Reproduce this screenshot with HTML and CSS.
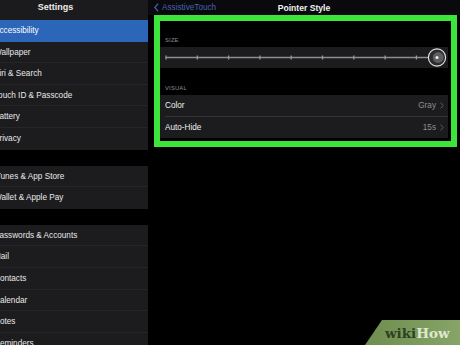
FILE: index.html
```html
<!DOCTYPE html>
<html lang="en">
<head>
    <meta charset="UTF-8">
    <meta name="viewport" content="width=device-width, initial-scale=1.0">
    <title>Pointer Style</title>
    <link rel="stylesheet" href="styles.css">
</head>
<body>
    <div class="screen">
        <aside class="sidebar">
            <div class="sidebar-title">Settings</div>
            <ul class="group">
                <li class="row active">Accessibility</li>
                <li class="row">Wallpaper</li>
                <li class="row">Siri &amp; Search</li>
                <li class="row">Touch ID &amp; Passcode</li>
                <li class="row">Battery</li>
                <li class="row last">Privacy</li>
            </ul>
            <ul class="group">
                <li class="row">iTunes &amp; App Store</li>
                <li class="row last">Wallet &amp; Apple Pay</li>
            </ul>
            <ul class="group">
                <li class="row">Passwords &amp; Accounts</li>
                <li class="row">Mail</li>
                <li class="row">Contacts</li>
                <li class="row">Calendar</li>
                <li class="row">Notes</li>
                <li class="row">Reminders</li>
            </ul>
        </aside>

        <main class="detail">
            <div class="navbar">
                <a class="back">
                    <svg width="5" height="9" viewBox="0 0 5 9"><polyline points="4.2,0.6 0.8,4.5 4.2,8.4" fill="none" stroke="#4762b0" stroke-width="1.2"/></svg>
                    AssistiveTouch
                </a>
                <div class="nav-title">Pointer Style</div>
                <span></span>
            </div>

            <div class="highlight">
                <div class="section-label">Size</div>
                <div class="slider-row">
                    <svg width="288" height="21" viewBox="0 0 288 21">
                        <line x1="6" y1="10.5" x2="270" y2="10.5" stroke="#8c8c8e" stroke-width="1.3"/>
                        <!-- tick marks -->
                        <g stroke="#9a9a9c" stroke-width="1.3">
                            <line x1="6" y1="8.5" x2="6" y2="12.5"/>
                            <line x1="37.3" y1="8.5" x2="37.3" y2="12.5"/>
                            <line x1="68.6" y1="8.5" x2="68.6" y2="12.5"/>
                            <line x1="99.9" y1="8.5" x2="99.9" y2="12.5"/>
                            <line x1="131.2" y1="8.5" x2="131.2" y2="12.5"/>
                            <line x1="162.5" y1="8.5" x2="162.5" y2="12.5"/>
                            <line x1="193.8" y1="8.5" x2="193.8" y2="12.5"/>
                            <line x1="225.1" y1="8.5" x2="225.1" y2="12.5"/>
                            <line x1="256.4" y1="8.5" x2="256.4" y2="12.5"/>
                        </g>
                        <circle cx="277" cy="10.5" r="8.6" fill="#2c2c2e" stroke="#e6e6e6" stroke-width="1.1"/>
                        <circle cx="278.2" cy="10.5" r="5.4" fill="#5e5e62"/>
                        <circle cx="277" cy="10.5" r="1.5" fill="#f2f2f2"/>
                    </svg>
                </div>
                <div class="section-label visual">Visual</div>
                <div class="option-row sep">
                    <span>Color</span>
                    <span class="value">Gray
                        <svg width="4" height="7" viewBox="0 0 4 7"><polyline points="0.6,0.6 3.2,3.5 0.6,6.4" fill="none" stroke="#5c5c60" stroke-width="1"/></svg>
                    </span>
                </div>
                <div class="option-row">
                    <span>Auto-Hide</span>
                    <span class="value">15s
                        <svg width="4" height="7" viewBox="0 0 4 7"><polyline points="0.6,0.6 3.2,3.5 0.6,6.4" fill="none" stroke="#5c5c60" stroke-width="1"/></svg>
                    </span>
                </div>
            </div>
        </main>

        <div class="watermark"><span class="wiki">wiki</span><span class="how">How</span></div>
    </div>
</body>
</html>
```

FILE: styles.css
```css
body {
    margin: 0;
    background-color: #000;
    font-family: "Liberation Sans", Arial, sans-serif;
    color: #f2f2f2;
}
.screen {
    position: relative;
    display: flex;
    width: 460px;
    height: 345px;
    overflow: hidden;
}

/* left settings list, its icons are cut off by the crop */
.sidebar {
    flex-shrink: 0;
    width: 185px;
    margin-left: -37px;
    background-color: #000;
}
.sidebar-title {
    height: 20px;
    padding-top: 1px;
    box-sizing: border-box;
    background-color: #1b1b1d;
    text-align: center;
    font-size: 9px;
    font-weight: bold;
    line-height: 12px;
    color: #ececec;
}
.group {
    list-style: none;
    margin: 0 0 16px 0;
    padding: 0;
    background-color: #1c1c1e;
}
.row {
    height: 21.6px;
    box-sizing: border-box;
    padding-left: 31px;
    font-size: 8.2px;
    line-height: 21px;
    color: #e8e8e8;
    border-bottom: 1px solid #262628;
}
.row.last {
    border-bottom: none;
}
.row.active {
    background-color: #2c66b9;
    color: #fff;
    border-bottom: none;
}

/* right detail pane */
.detail {
    flex: 1;
    background-color: #000;
}
.navbar {
    display: grid;
    grid-template-columns: 1fr auto 1fr;
    align-items: center;
    height: 15px;
    padding-left: 6px;
    background-color: #0a0a0e;
}
.back {
    display: flex;
    align-items: center;
    gap: 3px;
    font-size: 8.2px;
    color: #4762b0;
}
.nav-title {
    font-size: 8.6px;
    font-weight: bold;
    color: #f0f0f0;
    margin-left: -6px;
}
.highlight {
    margin: 0 3px 0 6px;
    padding-bottom: 3px;
    border: 6px solid #3ce43c;
    background-color: #000;
}
.section-label {
    padding: 15px 0 3px 5px;
    font-size: 5.8px;
    line-height: 8px;
    text-transform: uppercase;
    letter-spacing: 0.2px;
    color: #8d8d92;
}
.section-label.visual {
    padding-top: 16px;
}
.slider-row {
    height: 21px;
    margin-right: 3px;
    background-color: #1c1c1e;
}
.slider-row svg {
    display: block;
}
.option-row {
    display: flex;
    justify-content: space-between;
    align-items: center;
    height: 21.5px;
    box-sizing: border-box;
    margin-right: 3px;
    padding: 0 4px 0 5px;
    background-color: #1c1c1e;
    font-size: 8.2px;
    color: #f0f0f0;
}
.option-row.sep {
    background-image: linear-gradient(#343437, #343437);
    background-size: calc(100% - 5px) 1px;
    background-position: right bottom;
    background-repeat: no-repeat;
}
.value {
    display: flex;
    align-items: center;
    gap: 4px;
    color: #8e8e93;
}

/* wikiHow tag over the corner */
.watermark {
    position: absolute;
    right: 0;
    bottom: 0;
    width: 95px;
    height: 25px;
    padding: 5px 0 0 20px;
    box-sizing: border-box;
    background: linear-gradient(90deg, #6f8d4f, #87a468);
    clip-path: polygon(17px 0, 100% 0, 100% 100%, 0 100%);
    font-family: "DejaVu Serif", serif;
    font-weight: bold;
    font-size: 13.5px;
    line-height: 16px;
}
.wiki {
    color: #2a4320;
}
.how {
    color: #dfe8cf;
}
```
